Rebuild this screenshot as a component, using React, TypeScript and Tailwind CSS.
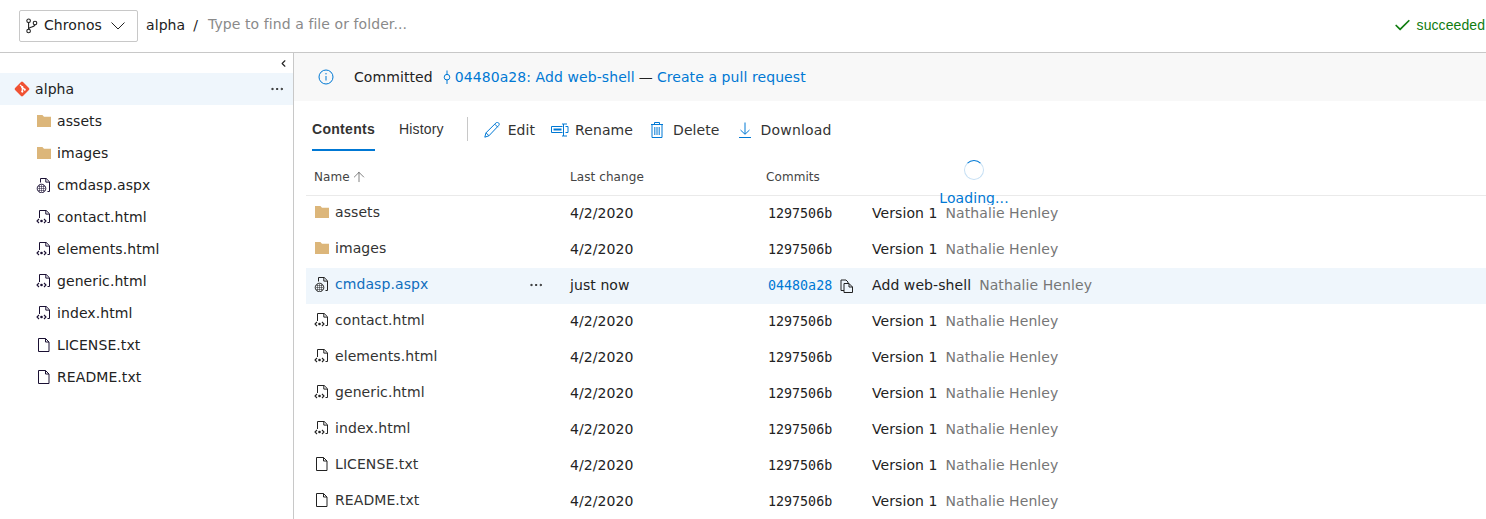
import React from "react";
import { ChevronLeft, Check, ArrowUp, Ellipsis } from "lucide-react";

const FolderIcon = () => (
  <svg width="16" height="16" viewBox="0 0 16 16" className="shrink-0">
    <path d="M1 2h5.4L8 3.8h7V14H1z" fill="#dcb67a" />
  </svg>
);

const GitIcon = () => (
  <svg width="16" height="16" viewBox="0 0 16 16" className="shrink-0">
    <rect x="2.4" y="2.4" width="11.2" height="11.2" rx="1.4" transform="rotate(45 8 8)" fill="#f05133" />
    <path d="M6 3.8 8.3 6.1V11M8.3 6.4l2.5 2.4" stroke="#fff" strokeWidth="1.2" fill="none" />
    <circle cx="8.3" cy="6.2" r="1.1" fill="#fff" />
    <circle cx="8.3" cy="10.6" r="1.1" fill="#fff" />
    <circle cx="10.7" cy="8.7" r="1.1" fill="#fff" />
  </svg>
);

const TextFileIcon = ({ color }: { color: string }) => (
  <svg width="16" height="16" viewBox="0 0 16 16" className="shrink-0">
    <path d="M2.5 1.5h7l3.500 3.500v9.500H2.500zM9.500 1.500v3.500H13" stroke={color} fill="none" strokeWidth="1" />
  </svg>
);

const HtmlFileIcon = ({ color }: { color: string }) => (
  <svg width="16" height="16" viewBox="0 0 16 16" className="shrink-0">
    <path d="M3.500 9V1.500h6.700l3.300 3.300V13.500h-2M9.800 1.500v3.600h3.700" stroke={color} fill="none" strokeWidth="1" />
    <path d="M3 10 1 12l2 2M8 10l2 2-2 2" stroke={color} fill="none" strokeWidth="1.100" />
    <circle cx="5.500" cy="12" r="1.300" fill={color} />
  </svg>
);

const WebFileIcon = ({ color }: { color: string }) => (
  <svg width="16" height="16" viewBox="0 0 16 16" className="shrink-0">
    <path d="M4.500 5.500V1.500h5.700l3.300 3.300V14.500h-2M9.800 1.500v3.600h3.700" stroke={color} fill="none" strokeWidth="1" />
    <circle cx="5.500" cy="11.500" r="4.300" fill="none" stroke={color} strokeWidth="0.9" />
    <path d="M1.500 11.500h8M5.500 7.500v8M2 9.500h7M2 13.500h7M3.500 8v7M7.500 8v7" stroke={color} strokeWidth="0.5" />
  </svg>
);

const BranchIcon = () => (
  <svg width="12" height="16" viewBox="0 0 12 16" className="shrink-0">
    <g fill="none" stroke="#222" strokeWidth="1.100">
      <circle cx="2.600" cy="2.800" r="1.800" />
      <circle cx="2.600" cy="13" r="1.800" />
      <circle cx="9" cy="5" r="1.800" />
      <path d="M2.600 4.600v6.600M9 6.800c0 2.600-6.400 1.800-6.400 4.400" />
    </g>
  </svg>
);

const InfoIcon = () => (
  <svg width="16" height="16" viewBox="0 0 16 16" className="shrink-0">
    <circle cx="8" cy="8" r="7" fill="none" stroke="#0078d4" strokeWidth="1" />
    <path d="M8 7v4.500" stroke="#0078d4" strokeWidth="1" />
    <circle cx="8" cy="4.800" r="0.700" fill="#0078d4" />
  </svg>
);

const CommitIcon = () => (
  <svg width="8" height="16" viewBox="0 0 8 16" className="shrink-0">
    <path d="M4 1.500v4.500M4 10.500v4.500" stroke="#0078d4" strokeWidth="1" />
    <circle cx="4" cy="8.200" r="2.800" fill="none" stroke="#0078d4" strokeWidth="1" />
  </svg>
);

const EditIcon = () => (
  <svg width="16" height="16" viewBox="0 0 16 16" className="shrink-0">
    <path d="M.8 15.200l1.200-4.400L12 .9c.8-.7 2-.7 2.700.1.700.8.700 1.800 0 2.500L4.900 13.800zM2 10.800l3 3M10.800 2.200l3 3" fill="none" stroke="#0078d4" strokeWidth="1" />
  </svg>
);

const RenameIcon = () => (
  <svg width="18" height="16" viewBox="0 0 18 16" className="shrink-0">
    <path d="M11.500 4.500H.5v6h11M14.500 4.500H17v6h-2.500M11 2h1.500v12H11M16 2h-3.500M16 14h-3.500" fill="none" stroke="#0078d4" strokeWidth="1" />
    <path d="M2.500 7.500h8" stroke="#0078d4" strokeWidth="2" />
  </svg>
);

const DeleteIcon = () => (
  <svg width="14" height="16" viewBox="0 0 14 16" className="shrink-0">
    <path d="M1 2.500h12M4.500 2.500V.5h5v2M2 2.500v13h10v-13M4.800 5v8M7 5v8M9.200 5v8" fill="none" stroke="#0078d4" strokeWidth="1" />
  </svg>
);

const DownloadIcon = () => (
  <svg width="14" height="16" viewBox="0 0 14 16" className="shrink-0">
    <path d="M7 .5v11.500M2.500 8 7 12.300 11.500 8M1 15.500h12" fill="none" stroke="#0078d4" strokeWidth="1" />
  </svg>
);

const CopyIcon = () => (
  <svg width="14" height="14" viewBox="0 0 14 14" className="shrink-0">
    <path d="M4 11.500H1V1h5l2 2v1M4 4.500h5l3.500 3.500v5.500H4zM9 4.500V8h3.500" fill="none" stroke="#222" strokeWidth="1" />
  </svg>
);

const treeItems = [
  { name: "assets", type: "folder" },
  { name: "images", type: "folder" },
  { name: "cmdasp.aspx", type: "web" },
  { name: "contact.html", type: "html" },
  { name: "elements.html", type: "html" },
  { name: "generic.html", type: "html" },
  { name: "index.html", type: "html" },
  { name: "LICENSE.txt", type: "text" },
  { name: "README.txt", type: "text" },
];

const FileIcon = ({ type, color }: { type: string; color: string }) => {
  if (type === "folder") return <FolderIcon />;
  if (type === "web") return <WebFileIcon color={color} />;
  if (type === "html") return <HtmlFileIcon color={color} />;
  return <TextFileIcon color={color} />;
};

const ToolbarAction = ({ icon, label, className }: { icon: React.ReactNode; label: string; className: string }) => (
  <div className={`mt-[3px] flex h-6 items-center text-[14px] text-[#333] ${className}`}>
    {icon}
    <span>{label}</span>
  </div>
);

export default function App() {
  return (
    <div className="h-[519px] w-[1486px] overflow-hidden bg-white font-['DejaVu_Sans',sans-serif] text-[14px] tracking-[0.08px] text-[#222]">
      {/* top bar */}
      <div className="flex h-[53px] items-center border-b border-[#c8c8c8] pl-[19px] pb-[1px]">
        <div className="flex h-8 w-[119px] items-center rounded-[2px] border border-[#c8c8c8] pl-[6px]">
          <BranchIcon />
          <span className="ml-[6px]">Chronos</span>
          <svg width="14" height="8" viewBox="0 0 14 8" className="ml-[9px]">
            <path d="M.5.5 7 7 13.500.5" fill="none" stroke="#222" strokeWidth="1" />
          </svg>
        </div>
        <span className="ml-2">alpha</span>
        <span className="ml-2">/</span>
        <span className="ml-[10px] -translate-y-[1px] text-[#8a8a8a]">Type to find a file or folder...</span>
        <div className="ml-auto flex items-center gap-[5px] pr-[1px] font-['Liberation_Sans',sans-serif] text-[#107c10]">
          <Check size={19} strokeWidth={2.200} />
          <span>succeeded</span>
        </div>
      </div>

      <div className="flex h-[466px]">
        {/* file tree */}
        <div className="w-[294px] shrink-0 border-r border-[#c8c8c8]">
          <div className="flex h-5 items-center justify-end pr-[4px]">
            <ChevronLeft size={11} strokeWidth={2.500} />
          </div>
          <div className="flex h-8 items-center bg-[#eff6fc] pl-[14px]">
            <GitIcon />
            <span className="ml-[5px]">alpha</span>
            <Ellipsis size={16} strokeWidth={1.500} className="ml-auto mr-[8px]" />
          </div>
          {treeItems.map((item) => (
            <div key={item.name} className="flex h-8 items-center pl-[36px]">
              <FileIcon type={item.type} color="#1a1033" />
              <span className="ml-[5px]">{item.name}</span>
            </div>
          ))}
        </div>

        {/* main panel */}
        <div className="relative min-w-0 flex-1">
          <div className="flex h-12 items-center bg-[#f8f8f8] pl-[24px]">
            <InfoIcon />
            <span className="ml-[20px]">Committed</span>
            <span className="ml-[10px] flex items-center text-[#0078d4]">
              <CommitIcon />
              <span className="ml-[4px]">04480a28: Add web-shell</span>
            </span>
            <span className="ml-[4px]">—</span>
            <span className="ml-[4px] text-[#0078d4]">Create a pull request</span>
          </div>

          <div className="flex h-[50px] items-start pl-[18px] pt-[14px]">
            <div className="h-[36px] border-b-2 border-[#0078d4] pt-[2px] font-['Liberation_Sans',sans-serif] font-bold leading-[24px] tracking-[0.3px] text-[#333]">
              Contents
            </div>
            <div className="ml-[24px] pt-[2px] font-['Liberation_Sans',sans-serif] leading-[24px] tracking-[0.15px] text-[#333]">History</div>
            <div className="ml-[23px] mt-[2px] h-6 w-px bg-[#c8c8c8]" />
            <ToolbarAction className="ml-[16px] gap-2" icon={<EditIcon />} label="Edit" />
            <ToolbarAction className="ml-[16px] gap-[6px]" icon={<RenameIcon />} label="Rename" />
            <ToolbarAction className="ml-[17px] gap-[9px]" icon={<DeleteIcon />} label="Delete" />
            <ToolbarAction className="ml-[18px] gap-[9px] tracking-[0.2px]" icon={<DownloadIcon />} label="Download" />
          </div>

          {/* loading overlay */}
          <div className="absolute left-[640px] top-[107px] z-20 flex h-[45px] w-[80px] flex-col items-center overflow-hidden text-[#0078d4]">
            <div className="h-5 w-5 shrink-0 rounded-full border-[1.5px] border-[#c7e0f4] border-t-[#0078d4]" />
            <span className="mt-[9px] leading-[18px]">Loading...</span>
          </div>

          <div className="ml-[12px] grid h-[45px] grid-cols-[264px_196px_1fr] items-center border-b border-[#eaeaea] pl-2 pt-[8px] text-[12px] text-[#444]">
            <div className="flex items-center gap-[1px]">
              Name <ArrowUp size={16} strokeWidth={1} />
            </div>
            <div className="-ml-2">Last change</div>
            <div className="-ml-2">Commits</div>
          </div>

          {treeItems.map((item) => {
            const active = item.name === "cmdasp.aspx";
            return (
              <div
                key={item.name}
                className={`ml-[12px] grid h-9 grid-cols-[256px_198px_104px_1fr] items-center pl-2 pb-[2px] ${active ? "bg-[#eff6fc]" : ""}`}
              >
                <div className="flex -translate-y-[1px] items-center">
                  <FileIcon type={item.type} color="#222" />
                  <span className={`ml-[5px] ${active ? "text-[#106ebe]" : "text-[#333]"}`}>{item.name}</span>
                  {active && <Ellipsis size={16} strokeWidth={1.500} className="ml-auto mr-[26px] translate-y-[1px]" />}
                </div>
                <div>{active ? "just now" : "4/2/2020"}</div>
                <div className="flex translate-y-[1px] items-center font-['DejaVu_Sans_Mono',monospace] text-[13.33px] tracking-normal">
                  <span className={active ? "text-[#0078d4]" : ""}>{active ? "04480a28" : "1297506b"}</span>
                  {active && <span className="ml-2"><CopyIcon /></span>}
                </div>
                <div className="flex gap-2">
                  <span>{active ? "Add web-shell" : "Version 1"}</span>
                  <span className="text-[#767676]">Nathalie Henley</span>
                </div>
              </div>
            );
          })}
        </div>
      </div>
    </div>
  );
}
